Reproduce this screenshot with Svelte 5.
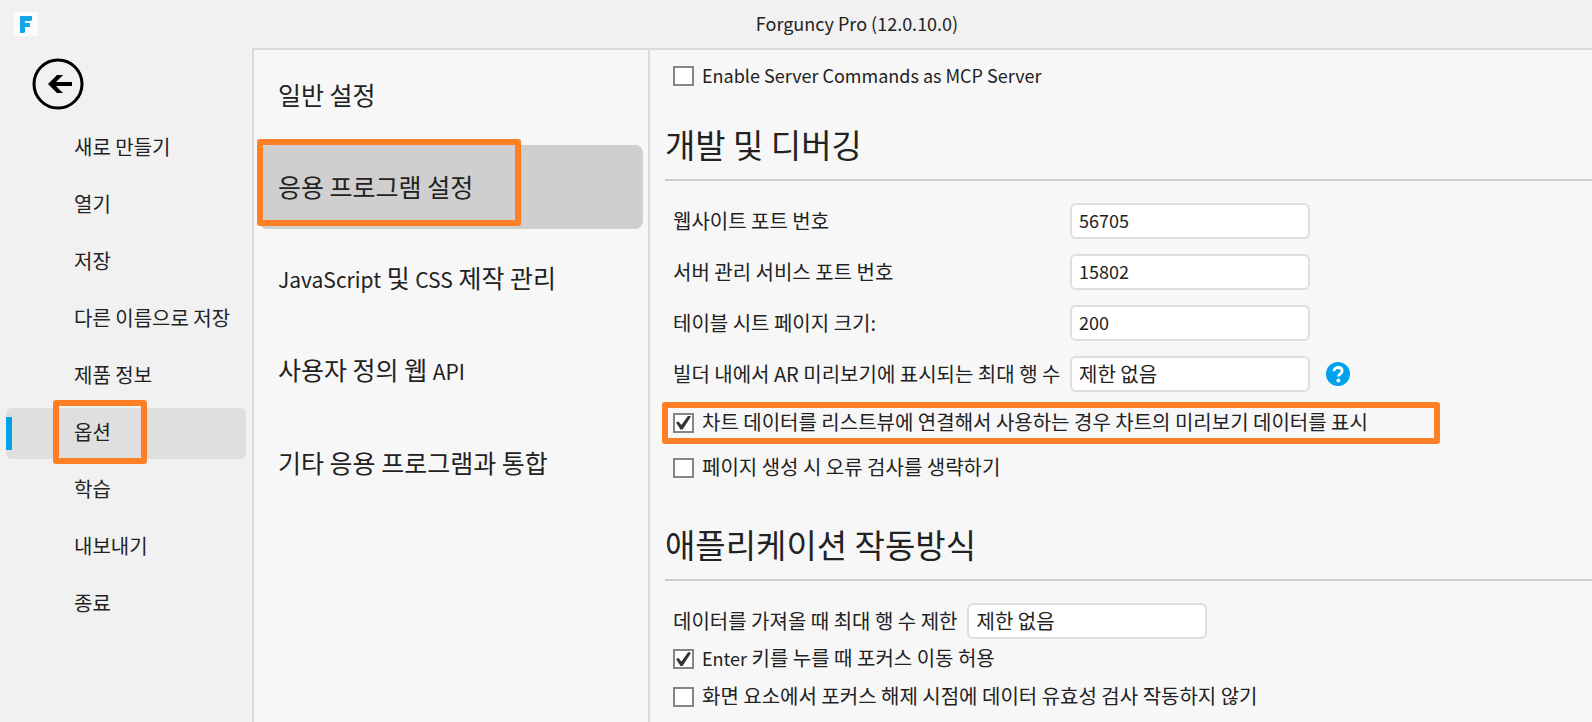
<script>
	const menu = [
		'새로 만들기',
		'열기',
		'저장',
		'다른 이름으로 저장',
		'제품 정보',
		'옵션',
		'학습',
		'내보내기',
		'종료'
	];

	const categories = [
		'일반 설정',
		'응용 프로그램 설정',
		'JavaScript 및 CSS 제작 관리',
		'사용자 정의 웹 API',
		'기타 응용 프로그램과 통합'
	];

	let selectedMenu = $state('옵션');
	let selectedCategory = $state('응용 프로그램 설정');

	let fields = $state([
		{ id: 'site-port', label: '웹사이트 포트 번호', value: '56705' },
		{ id: 'server-port', label: '서버 관리 서비스 포트 번호', value: '15802' },
		{ id: 'page-size', label: '테이블 시트 페이지 크기:', value: '200' },
		{
			id: 'preview-rows',
			label: '빌더 내에서 AR 미리보기에 표시되는 최대 행 수',
			value: '제한 없음',
			help: true
		}
	]);

	let rowLimit = $state('제한 없음');
	let mcpServer = $state(false);
	let chartPreview = $state(true);
	let skipErrors = $state(false);
	let enterFocus = $state(true);
	let skipValidation = $state(false);

	// Latin words are set slightly smaller than the Hangul around them
	function splitLatin(text) {
		return text.split(/([A-Za-z]{3,})/);
	}

	function isLatin(text) {
		return /^[\x20-\x7e]+$/.test(text);
	}
</script>

<div class="window">
	<header>
		<svg class="logo" viewBox="0 0 24 24" aria-hidden="true">
			<rect width="24" height="24" fill="#fbfbfb" />
			<path d="M6 4h12v4l-1 1h-6v2h5v4h-5v5l-1 1H6z" fill="#14a7e8" />
		</svg>
		<span class="title">Forguncy Pro (12.0.10.0)</span>
	</header>

	<div class="body">
		<nav class="sidebar">
			<button class="back" aria-label="뒤로">
				<svg viewBox="0 0 52 52">
					<circle cx="26" cy="26" r="24" fill="none" stroke="#000" stroke-width="3" />
					<path d="M16 26 25 17h6l-7 7h16v4H24l7 7h-6z" fill="#000" />
				</svg>
			</button>
			{#each menu as item}
				<button
					class="item"
					class:selected={item === selectedMenu}
					onclick={() => (selectedMenu = item)}
				>
					{item}
				</button>
			{/each}
		</nav>

		<nav class="categories">
			{#each categories as item}
				<button
					class="category"
					class:selected={item === selectedCategory}
					onclick={() => (selectedCategory = item)}
				>
					{#each splitLatin(item) as part}<span class:latin={isLatin(part)}>{part}</span>{/each}
				</button>
			{/each}
		</nav>

		<main>
			<label class="check first">
				<input type="checkbox" bind:checked={mcpServer} />
				<span class="latin">Enable Server Commands as MCP Server</span>
			</label>

			<h2>개발 및 디버깅</h2>
			<div class="fields">
				{#each fields as field}
					<div class="field">
						<label for={field.id}>{field.label}</label>
						<input
							id={field.id}
							class:latin={isLatin(field.value)}
							type="text"
							bind:value={field.value}
						/>
						{#if field.help}
							<button class="help" aria-label="도움말">
								<svg viewBox="0 0 24 24">
									<circle cx="12" cy="12" r="12" fill="#00a2ed" />
									<path
										d="M8 9.200c0-2.400 1.700-3.700 4.100-3.700s4 1.300 4 3.400c0 2.900-3.600 2.900-3.600 5.700"
										fill="none"
										stroke="#fff"
										stroke-width="2.800"
									/>
									<circle cx="12.400" cy="18.500" r="1.900" fill="#fff" />
								</svg>
							</button>
						{/if}
					</div>
				{/each}
			</div>
			<label class="check marked">
				<input type="checkbox" bind:checked={chartPreview} />
				<span>차트 데이터를 리스트뷰에 연결해서 사용하는 경우 차트의 미리보기 데이터를 표시</span>
			</label>
			<label class="check">
				<input type="checkbox" bind:checked={skipErrors} />
				<span>페이지 생성 시 오류 검사를 생략하기</span>
			</label>

			<h2>애플리케이션 작동방식</h2>
			<div class="field inline">
				<label for="row-limit">데이터를 가져올 때 최대 행 수 제한</label>
				<input id="row-limit" type="text" bind:value={rowLimit} />
			</div>
			<label class="check compact">
				<input type="checkbox" bind:checked={enterFocus} />
				<span><span class="latin">Enter</span> 키를 누를 때 포커스 이동 허용</span>
			</label>
			<label class="check compact">
				<input type="checkbox" bind:checked={skipValidation} />
				<span>화면 요소에서 포커스 해제 시점에 데이터 유효성 검사 작동하지 않기</span>
			</label>
		</main>
	</div>
</div>

<style>
	:global(body) {
		overflow: hidden;
	}

	.window {
		display: flex;
		flex-direction: column;
		height: 100vh;
		background: #f1f1f1;
		color: #222;
		font-family: 'Noto Sans CJK KR', sans-serif;
		font-size: 20px;
		line-height: 28px;
		white-space: nowrap;
	}

	button,
	input {
		box-sizing: border-box;
		font: inherit;
		color: inherit;
	}

	button {
		border: none;
		background: none;
		padding: 0;
		text-align: left;
		cursor: pointer;
	}

	header {
		display: flex;
		align-items: center;
		flex: none;
		height: 48px;
		padding-left: 14px;
	}

	.logo {
		width: 24px;
		height: 24px;
	}

	.title {
		flex: 1;
		padding: 0 0 2px 84px;
		font-size: 18px;
		text-align: center;
	}

	.body {
		display: flex;
		flex: 1;
		min-height: 0;
	}

	.sidebar {
		display: flex;
		flex-direction: column;
		gap: 6px;
		flex: none;
		box-sizing: border-box;
		width: 252px;
		padding: 10px 6px 0;
	}

	.back {
		width: 52px;
		height: 52px;
		margin: 0 0 7px 26px;
	}

	.back svg,
	.help svg {
		display: block;
	}

	.item {
		position: relative;
		flex: none;
		height: 51px;
		padding: 0 0 4px 68px;
		border-radius: 6px;
	}

	.item.selected {
		background: #dfdfdf;
	}

	.item.selected::before {
		content: '';
		position: absolute;
		left: 0;
		top: 9px;
		width: 6px;
		height: 33px;
		background: #00a2e8;
	}

	.item.selected::after,
	.category.selected::after,
	.marked::after {
		content: '';
		position: absolute;
		box-sizing: border-box;
		border: 6px solid #ff7f27;
		border-radius: 3px;
		pointer-events: none;
	}

	.item.selected::after {
		left: 47px;
		top: -8px;
		width: 94px;
		height: 64px;
	}

	.categories {
		display: flex;
		flex-direction: column;
		gap: 8px;
		flex: none;
		box-sizing: border-box;
		width: 396px;
		padding: 3px 5px;
		border: solid #dadada;
		border-width: 2px 0 0 2px;
		background: #f7f7f7;
		font-size: 25px;
	}

	.category {
		position: relative;
		flex: none;
		height: 84px;
		padding: 0 0 2px 19px;
		border-radius: 8px;
	}

	.category.selected {
		background: #cfcfcf;
	}

	.category.selected::after {
		left: -2px;
		top: -6px;
		width: 264px;
		height: 87px;
	}

	.category .latin {
		font-size: 21px;
	}

	main {
		flex: 1;
		min-width: 0;
		padding: 12px 0 0 15px;
		border: solid #dadada;
		border-width: 2px 0 0 2px;
		background: #f7f7f7;
	}

	.latin {
		font-size: 18px;
	}

	.check {
		position: relative;
		display: flex;
		align-items: center;
		width: fit-content;
		height: 45px;
		padding-left: 8px;
	}

	.check.first {
		height: 28px;
	}

	.check.compact {
		height: 38px;
	}

	.check > span {
		padding-bottom: 2px;
	}

	.check input {
		appearance: none;
		width: 21px;
		height: 20px;
		margin: 0 8px 0 0;
		border: 2px solid #858585;
		background: #fff;
	}

	.check input:checked {
		display: grid;
		place-items: center;
	}

	.check input:checked::before {
		content: '';
		width: 15px;
		height: 14px;
		background: #333;
		clip-path: polygon(0 50%, 16% 42%, 36% 68%, 82% 0, 100% 8%, 44% 100%, 30% 100%);
	}

	.marked::after {
		left: -3px;
		top: 2px;
		width: 778px;
		height: 42px;
	}

	h2 {
		margin: 30px 0 22px;
		padding-bottom: 11px;
		border-bottom: 2px solid #cdcdcd;
		font-size: 33px;
		font-weight: 400;
		line-height: 48px;
	}

	.fields {
		display: grid;
		gap: 15px;
		margin-bottom: 8px;
	}

	.field {
		display: grid;
		grid-template-columns: 389px 240px auto;
		justify-content: start;
		align-items: center;
		gap: 8px;
		padding-left: 8px;
	}

	.field.inline {
		grid-template-columns: auto 240px;
		gap: 10px;
		margin-bottom: 1px;
	}

	.field input {
		width: 100%;
		height: 36px;
		padding: 0 7px 2px;
		border: 2px solid #dedede;
		border-radius: 6px;
		background: #fff;
	}

	.help {
		width: 24px;
		height: 24px;
		margin-left: 8px;
	}
</style>
